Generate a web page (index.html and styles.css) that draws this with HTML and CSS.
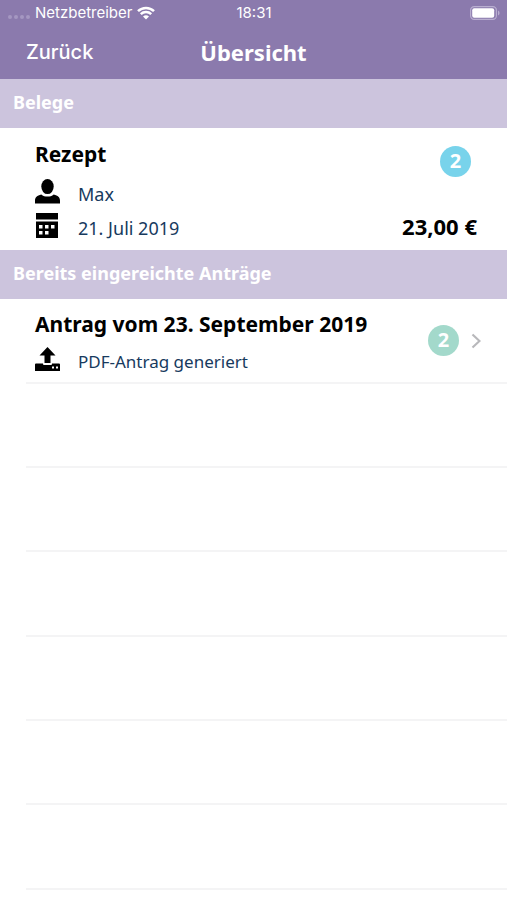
FILE: index.html
```html
<!DOCTYPE html>
<html lang="de">
<head>
<meta charset="utf-8">
<meta name="viewport" content="width=device-width, initial-scale=1">
<title>Übersicht</title>
<link rel="stylesheet" href="styles.css">
</head>
<body>
<header class="top">
  <div class="status">
    <div class="carrier">
      <span class="signal"><i></i><i></i><i></i><i></i></span>
      <span>Netzbetreiber</span>
      <svg class="wifi" viewBox="0 0 18 14" aria-hidden="true">
        <path d="M1 5.2a11.4 11.4 0 0 1 16 0M3.8 8.2a7.4 7.400 0 0 1 10.4 0" fill="none" stroke="#fff" stroke-width="2.500"/>
        <path d="M9 13.6 6 10.6a4.3 4.3 0 0 1 6 0z" fill="#fff"/>
      </svg>
    </div>
    <time class="clock">18:31</time>
    <svg class="battery" viewBox="0 0 30 14" aria-hidden="true">
      <rect x=".6" y=".6" width="25.8" height="12.8" rx="3.6" fill="none" stroke="#b9aed0" stroke-width="1.2"/>
      <rect x="2.2" y="2.2" width="22" height="9.6" rx="2" fill="#fff"/>
      <path d="M28 4.500q1.600.8 1.600 2.500T28 9.500z" fill="#b9aed0"/>
    </svg>
  </div>
  <nav class="nav">
    <button class="back" type="button">Zurück</button>
    <h1 class="title">Übersicht</h1>
  </nav>
</header>
<main>
  <section>
    <h2 class="section">Belege</h2>
    <article class="receipt">
      <div class="info">
        <h3 class="name">Rezept</h3>
        <p class="line person">
          <svg class="icon" viewBox="0 0 25 25" aria-hidden="true">
            <ellipse cx="12.5" cy="7.6" rx="6.2" ry="7.5"/>
            <path d="M0 24.500v-2.800c0-3.400 2-5.200 6.300-6.300 3.300 2.900 9.100 2.900 12.400 0 4.300 1.100 6.300 2.900 6.300 6.300v2.800z"/>
          </svg>
          <span class="text">Max</span>
        </p>
        <p class="line date">
          <svg class="icon" viewBox="0 0 25 25" aria-hidden="true">
            <path d="M1 0h22v6.500H1z"/>
            <path fill-rule="evenodd" d="M1 8.500h22V25H1zM4 12v3.500h3.500V12zm6 0v3.500h3.500V12zm6 0v3.500h3.500V12zM4 18v3.500h3.500V18zm6 0v3.500h3.500V18z"/>
          </svg>
          <span class="text">21. Juli 2019</span>
        </p>
      </div>
      <div class="side">
        <span class="badge blue">2</span>
        <span class="amount">23,00 €</span>
      </div>
    </article>
  </section>
  <section>
    <h2 class="section">Bereits eingereichte Anträge</h2>
    <a class="claim" href="#antrag">
      <div class="info">
        <h3 class="name">Antrag vom 23. September 2019</h3>
        <p class="line state">
          <svg class="icon" viewBox="0 0 25 25" aria-hidden="true">
            <path d="M12.500 0 20.500 8.500h-5V16h-6V8.500h-5z"/>
            <path fill-rule="evenodd" d="M1 16.500h7v.5q0 1 1 1h7q1 0 1-1v-.5h7q1 0 1 1V24H0v-6.500q0-1 1-1zM17 19.500v2h2v-2zm4 0v2h2v-2z"/>
          </svg>
          <span class="text">PDF-Antrag generiert</span>
        </p>
      </div>
      <span class="badge green">2</span>
      <svg class="chevron" viewBox="0 0 10 16" aria-hidden="true"><path d="m1.500 1.500 7 6.500-7 6.500" fill="none" stroke="#b8b8bb" stroke-width="2.200"/></svg>
    </a>
    <ul class="blanks">
      <li></li><li></li><li></li><li></li><li></li><li></li>
    </ul>
  </section>
</main>
</body>
</html>
```
FILE: styles.css
```css
* {
  box-sizing: border-box;
}

body {
  margin: 0;
  background: #fff;
  color: #000;
  font-family: "Noto Sans", "Open Sans", sans-serif;
}

h1, h2, h3, p, ul {
  margin: 0;
  padding: 0;
}

svg {
  display: block;
  flex: none;
}

.top {
  height: 79px;
  background: #8b7aad;
  color: #fff;
}

.status {
  display: grid;
  grid-template-columns: 1fr auto 1fr;
  align-items: center;
  height: 26px;
  padding: 0 7px 0 8px;
  font: 400 15px/26px Inter, Roboto, sans-serif;
}

.carrier {
  display: flex;
  align-items: center;
  gap: 5px;
}

.signal {
  display: flex;
  gap: 2px;
  padding-top: 8px;
}

.signal i {
  width: 4px;
  height: 4px;
  border-radius: 50%;
  background: #a597c1;
}

.wifi {
  width: 18px;
  height: 14px;
}

.battery {
  width: 30px;
  height: 14px;
  justify-self: end;
}

.nav {
  display: grid;
  grid-template-columns: 1fr auto 1fr;
  align-items: center;
  height: 52px;
  padding: 0 26px;
}

.back {
  justify-self: start;
  padding: 0;
  border: 0;
  background: none;
  color: inherit;
  font: 500 20px/28px Inter, Roboto, sans-serif;
}

.title {
  font-size: 22px;
  line-height: 28px;
}

.section {
  height: 49px;
  padding: 0 13px;
  background: #ccc4dd;
  color: #fff;
  font-size: 18px;
  line-height: 46px;
}

.receipt {
  display: flex;
  justify-content: space-between;
  height: 122px;
  padding: 12px 30px 0 35px;
}

.info {
  flex: 1;
}

.name {
  font-size: 21px;
  line-height: 28px;
}

.line {
  display: flex;
  align-items: center;
  gap: 18px;
  height: 34px;
  color: #173a5e;
  font-size: 18px;
  line-height: 28px;
}

.text {
  padding-top: 6px;
}

.icon {
  width: 25px;
  height: 25px;
  fill: #000;
}

.person {
  margin-top: 6px;
}

.state {
  margin-top: 4px;
  font-size: 17px;
}

.side {
  display: flex;
  flex-direction: column;
  align-items: flex-end;
  justify-content: space-between;
  padding: 6px 0 10px;
}

.badge {
  width: 31px;
  height: 31px;
  margin-right: 6px;
  border-radius: 50%;
  color: #fff;
  font-size: 20px;
  font-weight: 700;
  line-height: 30px;
  text-align: center;
}

.blue {
  background: #78d3eb;
}

.green {
  margin-right: 12px;
  background: #a3d9cb;
}

.amount {
  font-size: 22px;
  font-weight: 700;
  line-height: 28px;
}

.claim {
  display: flex;
  align-items: center;
  height: 83px;
  padding: 0 26px 0 35px;
  color: inherit;
  text-decoration: none;
}

.claim .info {
  align-self: flex-start;
  padding-top: 11px;
}

.chevron {
  width: 10px;
  height: 16px;
}

.blanks {
  margin-left: 26px;
  border-top: 2px solid #f4f4f5;
  list-style: none;
}

.blanks li {
  height: 84px;
  border-bottom: 2px solid #f4f4f5;
}

.blanks li:nth-child(3n) {
  height: 85px;
}
```
